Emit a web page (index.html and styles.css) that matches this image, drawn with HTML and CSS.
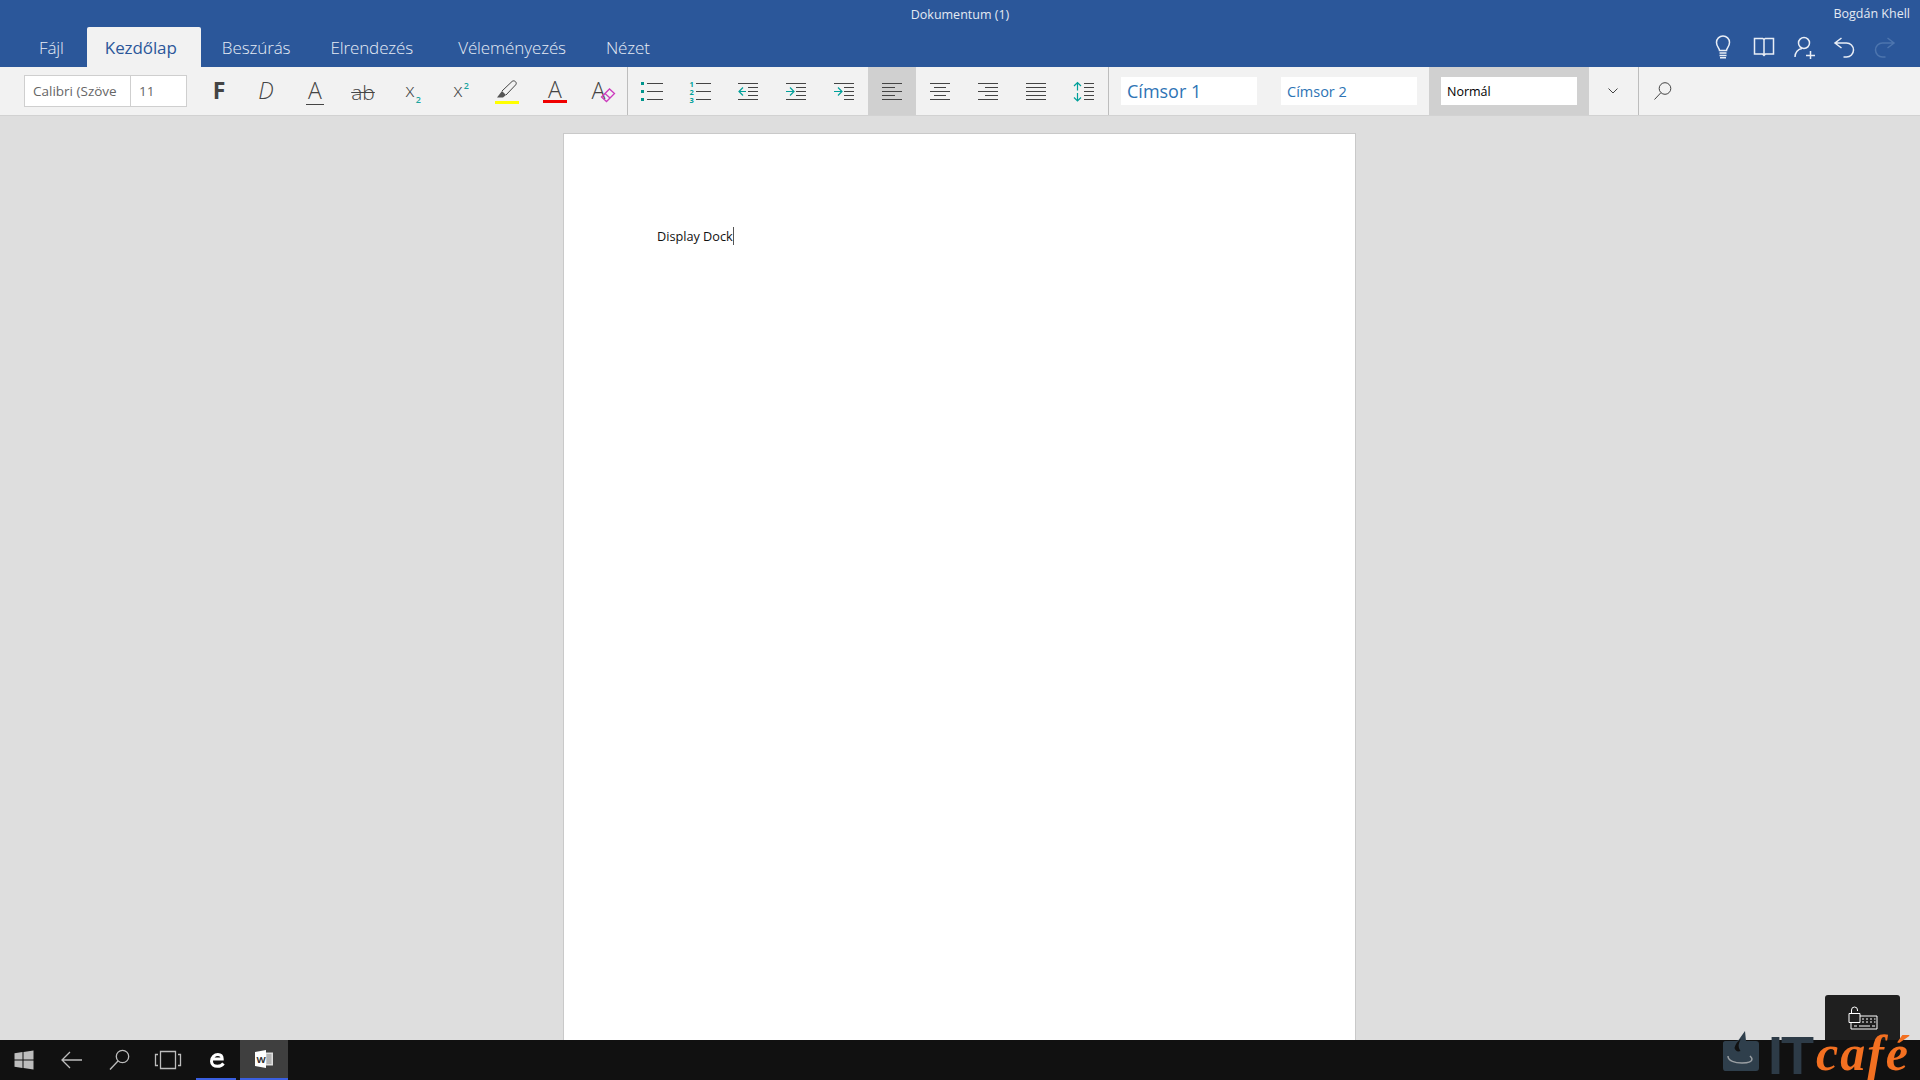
FILE: index.html
```html
<!DOCTYPE html>
<html lang="hu">
<head>
<meta charset="utf-8">
<title>Dokumentum (1) - Word</title>
<link rel="stylesheet" href="styles.css">
</head>
<body>
<div class="app">
  <header class="titlebar">
    <div class="title-row">
      <span class="doc-title">Dokumentum (1)</span>
      <span class="user-name">Bogdán Khell</span>
    </div>
    <div class="tab-row">
      <nav class="tabs">
        <span class="tab tab-file">Fájl</span>
        <span class="tab tab-home">Kezdőlap</span>
        <span class="tab tab-insert">Beszúrás</span>
        <span class="tab tab-layout">Elrendezés</span>
        <span class="tab tab-review">Véleményezés</span>
        <span class="tab tab-view">Nézet</span>
      </nav>
      <div class="quick">
        <span class="quick-btn"><svg class="ic24" viewBox="0 0 24 24"><path d="M8.5 15.5c0-2.500-3-3.800-3-8a6.500 6.500 0 0 1 13 0c0 4.200-3 5.500-3 8z"/><path d="M8.500 18h7M8.500 20.500h7M9 22.800h6"/></svg></span>
        <span class="quick-btn"><svg class="ic24" viewBox="0 0 24 24"><path d="M2.500 3.500h8.200l1.300 1 1.300-1h8.200v15.500h-8l-1.500 1.500-1.500-1.500h-8zM12 4.500v15.500"/></svg></span>
        <span class="quick-btn"><svg class="ic24" viewBox="0 0 24 24"><circle cx="12" cy="8" r="5.500"/><path d="M3 22c0-4.500 3-8 7-8.500M14 20.500h9M18.500 16v9"/></svg></span>
        <span class="quick-btn"><svg class="ic24" viewBox="0 0 24 24"><path d="M9.500 3l-6.500 5 6.500 5M3 8h11.500a7 7 0 0 1 0 14h-3"/></svg></span>
        <span class="quick-btn quick-dim"><svg class="ic24" viewBox="0 0 24 24"><path d="M14.500 3l6.500 5-6.500 5M21 8H9.500a7 7 0 0 0 0 14h3"/></svg></span>
      </div>
    </div>
  </header>

  <div class="toolbar">
    <div class="font-box">
      <span class="font-name">Calibri (Szöve</span>
      <span class="font-size">11</span>
    </div>
    <div class="group">
      <span class="btn"><b class="g g-bold">F</b></span>
      <span class="btn"><i class="g g-italic">D</i></span>
      <span class="btn"><span class="g g-under">A</span></span>
      <span class="btn"><span class="g g-strike">ab</span></span>
      <span class="btn"><span class="g g-script">x<sub class="teal-sub">2</sub></span></span>
      <span class="btn"><span class="g g-script">x<sup class="teal-sup">2</sup></span></span>
      <span class="btn btn-col">
        <svg class="pen" viewBox="0 0 24 20"><path class="pen-line" d="M7 11L17 1.500c1-1 2.500-.8 3.500.2s1 2.300 0 3.300L11 15"/><path class="pen-fill" d="M7 11l4 4-3 2.500H2z"/></svg>
        <span class="bar bar-yellow"></span>
      </span>
      <span class="btn btn-col"><span class="g g-color">A</span><span class="bar bar-red"></span></span>
      <span class="btn btn-clear"><span class="g g-clear">A</span>
        <svg class="eraser" viewBox="0 0 16 16"><path d="M1.500 10L9.500 2l5 4.500-8 8z"/><path d="M5 6.500l5 4.500"/></svg>
      </span>
    </div>
    <div class="group">
      <span class="btn"><svg class="ic24 ic-tool" viewBox="0 0 24 24"><path d="M7 4.500h16M7 12.500h16M7 20.500h16"/><path class="t-fill" d="M1 3h3v3H1zM1 11h3v3H1zM1 19h3v3H1z"/></svg></span>
      <span class="btn"><svg class="ic24 ic-tool" viewBox="0 0 24 24"><path d="M8 4.500h15M8 12.500h15M8 20.500h15"/><text class="t-num" x="1.500" y="7.500">1</text><text class="t-num" x="1.500" y="15.500">2</text><text class="t-num" x="1.500" y="23.500">3</text></svg></span>
      <span class="btn"><svg class="ic24 ic-tool" viewBox="0 0 24 24"><path d="M2 4.500h20M12 8.500h10M12 12.500h10M12 16.500h10M2 20.500h20"/><path class="t-line" d="M10 12.500H3M7 8.500l-4 4 4 4"/></svg></span>
      <span class="btn"><svg class="ic24 ic-tool" viewBox="0 0 24 24"><path d="M2 4.500h20M12 8.500h10M12 12.500h10M12 16.500h10M2 20.500h20"/><path class="t-line" d="M2 12.500h8M6 8.500l4 4-4 4"/></svg></span>
      <span class="btn"><svg class="ic24 ic-tool" viewBox="0 0 24 24"><path d="M2 4.500h20M12 8.500h10M12 12.500h10M12 16.500h10M12 20.500h10"/><path class="t-line" d="M2 12.500h8M6 8.500l4 4-4 4"/></svg></span>
      <span class="btn btn-active"><svg class="ic24 ic-tool" viewBox="0 0 24 24"><path d="M2 4.500h20M2 8.500h13M2 12.500h20M2 16.500h13M2 20.500h20"/></svg></span>
      <span class="btn"><svg class="ic24 ic-tool" viewBox="0 0 24 24"><path d="M2 4.500h20M6 8.500h12M2 12.500h20M6 16.500h12M2 20.500h20"/></svg></span>
      <span class="btn"><svg class="ic24 ic-tool" viewBox="0 0 24 24"><path d="M2 4.500h20M9 8.500h13M2 12.500h20M9 16.500h13M2 20.500h20"/></svg></span>
      <span class="btn"><svg class="ic24 ic-tool" viewBox="0 0 24 24"><path d="M2 4.500h20M2 8.500h20M2 12.500h20M2 16.500h20M2 20.500h20"/></svg></span>
      <span class="btn"><svg class="ic24 ic-tool" viewBox="0 0 24 24"><path d="M12 4.500h10M12 8.500h10M12 12.500h10M12 16.500h10M12 20.500h10"/><path class="t-line" d="M5.500 4v7.500M2 7l3.500-3.500L9 7M5.500 14v8M2 18.500L5.500 22 9 18.500"/></svg></span>
    </div>
    <div class="styles">
      <div class="style-cell"><span class="style-box style-h1">Címsor 1</span></div>
      <div class="style-cell"><span class="style-box style-h2">Címsor 2</span></div>
      <div class="style-cell style-cell-active"><span class="style-box style-normal">Normál</span></div>
    </div>
    <span class="btn btn-more"><svg class="ic24 ic-tool" viewBox="0 0 24 24"><path d="M7.500 9.500l4.500 4.500 4.500-4.500"/></svg></span>
    <span class="btn"><svg class="ic24 ic-tool" viewBox="0 0 24 24"><circle cx="14" cy="9.500" r="5.800"/><path d="M9.800 13.800L3.500 20.500"/></svg></span>
  </div>

  <main class="canvas">
    <article class="sheet"><p class="doc-text"><span class="caret">Display Dock</span></p></article>
  </main>

  <footer class="taskbar">
    <span class="task"><svg class="ic24 ic-task" viewBox="0 0 24 24"><path class="w-fill" d="M2.500 5.200l8-1.100v7.400h-8zM11.500 4l10-1.400v8.900h-10zM2.500 12.500h8v7.400l-8-1.100zM11.500 12.500h10v8.900l-10-1.400z"/></svg></span>
    <span class="task"><svg class="ic24 ic-task" viewBox="0 0 24 24"><path d="M2 12h20M10 4l-8 8 8 8"/></svg></span>
    <span class="task"><svg class="ic24 ic-task" viewBox="0 0 24 24"><circle cx="14.500" cy="8.500" r="6.200"/><path d="M10 13L2 21.500"/></svg></span>
    <span class="task"><svg class="ic-view" viewBox="0 0 28 20"><path d="M6.500 1.500h15v17h-15zM4 4.500H1.500v11H4M24 4.500h2.500v11H24"/></svg></span>
    <span class="task task-edge"><svg class="ic24" viewBox="0 0 24 24"><path class="edge" d="M19.500 15.500c-1.500 2-3.800 2.800-6 2.800-3.500 0-6-1.900-6-5 0-4 3.200-6.800 6.400-6.800 3 0 4.300 1.900 4.300 4.500H7.800"/></svg></span>
    <span class="task task-word"><svg class="ic-word" viewBox="0 0 20 20"><path class="word-sheet" d="M11 3.500h8v13h-8z"/><path class="word-lines" d="M12.500 6h5M12.500 8h5M12.500 10h5M12.500 12h5M12.500 14h5"/><path class="word-box" d="M1 3L12 1v18L1 17z"/><text class="word-w" x="2.600" y="13.500">W</text></svg></span>
  </footer>

  <div class="kbd-tip"><svg class="kbd-icon" viewBox="0 0 30 25"><path d="M1 8.500h11v9H1zM3.500 8.500V5a3 3 0 0 1 6 0v1M12 11h17v13H3v-6.500"/><path d="M14 14h2M18 14h2M22 14h2M26 14h1.500M14 17h2M18 17h2M22 17h2M26 17h1.500M6 21h3M11 21h11M24 21h3"/></svg></div>

  <div class="watermark">
    <svg class="wm-cup" viewBox="0 0 36 40"><path class="cup-body" d="M2 10h10c3 0 4-1 5-3l5-7 1 10h10c2 0 3 1 3 3v24c0 2-1 3-3 3H2c-1 0-2-1-2-3V12c0-1 1-2 2-2z"/><path class="cup-dark" d="M18 8c-3 5-3 8-.5 12-3 1-5 0-6-3 1-4 3-7 6.500-9z"/><path class="cup-arc" d="M5 25c0 5 7 7 14 7 5 0 10-1 10-4 0-1-1-2-2-3"/></svg>
    <span class="wm-it">IT</span>
    <span class="wm-cafe">café</span>
  </div>
</div>
</body>
</html>
```
FILE: styles.css
```css
* { box-sizing: border-box; }
html, body { margin: 0; height: 100%; overflow: hidden; }
body { font-family: "Open Sans", "Noto Sans", sans-serif; color: #444; background: #dedede; }
.app { position: relative; display: flex; flex-direction: column; height: 1080px; width: 1920px; overflow: hidden; }

/* title bar */
.titlebar { height: 67px; background: #2b579a; color: #fff; flex: none; }
.title-row { position: relative; height: 27px; display: flex; justify-content: center; align-items: center; font-size: 12.5px; color: #e4eaf3; }
.user-name { position: absolute; right: 10px; top: 5px; line-height: 18px; }
.doc-title { line-height: 18px; margin-top: 3px; }
.tab-row { height: 40px; display: flex; justify-content: space-between; }
.tabs { display: flex; padding-left: 18px; }
.tab { height: 40px; padding: 0 20px; display: flex; align-items: center; font-size: 17px; font-weight: 300; color: #e6ecf5; letter-spacing: -.1px; }
.tab-file { padding: 0 23px 0 21px; }
.tab-home { width: 114px; padding: 0 0 0 18px; background: #f2f2f2; color: #2b579a; font-weight: 400; border-radius: 2px 2px 0 0; }
.tab-insert { padding: 0 20px 0 21px; }
.tab-review { padding-left: 25px; }
.quick { display: flex; padding-right: 15px; }
.quick-btn { width: 40.4px; display: flex; justify-content: center; align-items: center; }
.ic24 { width: 24px; height: 24px; fill: none; stroke: currentColor; stroke-width: 1.3; }
.quick-btn .ic24 { color: #e9eef6; stroke-width: 1.5; }
.quick-dim .ic24 { color: #4d75ae; }

/* toolbar */
.toolbar { height: 49px; flex: none; display: flex; background: #f2f2f2; border-bottom: 1px solid #d2d2d2; }
.font-box { display: flex; width: 163px; height: 32px; margin: 8px 8px 0 24px; background: #fff; border: 1px solid #cfcfcf; font-size: 13.5px; color: #666; flex: none; }
.font-name { width: 106px; padding-left: 8px; border-right: 1px solid #cfcfcf; display: flex; align-items: center; white-space: nowrap; }
.font-size { padding-left: 8px; display: flex; align-items: center; }
.group { display: flex; border-right: 1px solid #bdbdbd; flex: none; }
.btn { position: relative; width: 48px; height: 48px; flex: none; display: flex; align-items: center; justify-content: center; }
.btn-active { background: #d0d0d0; }
.btn-more { width: 50px; border-right: 1px solid #bdbdbd; padding-right: 2px; }
.btn-col { flex-direction: column; }
.ic-tool { color: #444; stroke-width: 1; }
.t-fill { fill: #00958d; stroke: none; }
.t-line { stroke: #00a09a; stroke-width: 1.2; fill: none; }
.t-num { fill: #00a09a; stroke: none; font: 700 7.5px "Open Sans", sans-serif; }

.g { display: block; font-size: 23px; line-height: 24px; color: #444; font-weight: 300; margin-bottom: 2px; }
.g-bold { font-weight: 700; }
.g-italic { font-style: italic; margin-right: 2px; }
.g-under { border-bottom: 1px solid #444; padding: 0 2px; height: 27px; margin: 1px 0 0; }
.g-strike { font-size: 21px; text-decoration: line-through; text-decoration-thickness: 1px; padding: 0 2px; margin: 1px 0 0; }
.g-script { font-size: 19px; margin-left: 4px; }
.teal-sub, .teal-sup { font-size: 9px; color: #1aa5a0; font-weight: 600; margin-left: 1px; line-height: 0; }
.teal-sub { vertical-align: -6px; }
.teal-sup { vertical-align: 8px; }
.pen { width: 24px; height: 20px; margin-top: 2px; }
.pen-line { fill: none; stroke: #444; stroke-width: 1; }
.pen-fill { fill: #555; }
.bar { display: block; width: 24px; height: 3px; margin-top: 1px; }
.bar-yellow { background: #ffff00; }
.bar-red { background: #f00000; }
.g-color { height: 20px; line-height: 20px; margin: 0; }
.g-clear { margin-right: 9px; }
.eraser { position: absolute; left: 21px; top: 20px; width: 16px; height: 16px; fill: none; stroke: #cc3bbd; stroke-width: 1.3; }

/* style gallery */
.styles { display: flex; flex: none; }
.style-cell { width: 160px; height: 48px; padding: 10px 12px; flex: none; }
.style-cell-active { background: #d0d0d0; }
.style-box { display: flex; align-items: center; height: 28px; background: #fff; padding-left: 6px; white-space: nowrap; }
.style-h1 { font-size: 18px; color: #2e74b5; }
.style-h2 { font-size: 14.5px; color: #2e74b5; }
.style-normal { font-size: 12.5px; color: #000; }

/* document */
.canvas { flex: 1; min-height: 0; display: flex; justify-content: center; padding: 17px 1px 0 0; overflow: hidden; }
.sheet { width: 793px; height: 1100px; background: #fff; border: 1px solid #c9c9c9; padding: 93px 0 0 93px; flex: none; }
.doc-text { margin: 0; font-size: 12.7px; line-height: 18px; color: #111; }
.caret { border-right: 1px solid #555; display: inline-block; }

/* taskbar */
.taskbar { position: relative; z-index: 2; height: 40px; flex: none; display: flex; background: #111; }
.task { width: 48px; height: 40px; display: flex; align-items: center; justify-content: center; position: relative; flex: none; }
.ic-task { color: #bdbdbd; stroke-width: 1.3; }
.w-fill { fill: #bdbdbd; stroke: none; }
.ic-view { width: 28px; height: 20px; fill: none; stroke: #bdbdbd; stroke-width: 1.3; }
.task-edge::after { content: ""; position: absolute; left: 4px; right: 4px; bottom: 0; height: 2px; background: #3a5fe0; }
.task-word { background: #3f3f3f; border-bottom: 2px solid #3a5fe0; }
.edge { fill: none; stroke: #fff; stroke-width: 3; }
.ic-word { width: 20px; height: 20px; }
.word-sheet { fill: #ddd; }
.word-lines { stroke: #888; stroke-width: 1; }
.word-box { fill: #fff; }
.word-w { font: 700 9.5px "Open Sans", sans-serif; fill: #333; }

/* overlays */
.kbd-tip { position: absolute; left: 1825px; top: 995px; width: 75px; height: 60px; background: #1f1f1f; border-radius: 3px 3px 0 0; display: flex; justify-content: center; padding-top: 10px; z-index: 1; }
.kbd-icon { width: 30px; height: 25px; fill: none; stroke: #fff; stroke-width: 1; }
.watermark { position: absolute; left: 1723px; top: 1031px; width: 197px; height: 49px; z-index: 3; display: flex; align-items: flex-start; overflow: hidden; }
.wm-cup { width: 36px; height: 40px; flex: none; }
.cup-body { fill: #2f3f4c; }
.cup-dark { fill: #111; }
.cup-arc { fill: none; stroke: #9a9fa3; stroke-width: 1.5; }
.wm-it { font: 700 54px/49px "Liberation Sans", sans-serif; color: #2d3b47; margin-left: 9px; letter-spacing: -2px; flex: none; width: 46px; }
.wm-cafe { font: italic 700 50px/44px "Liberation Serif", serif; color: #f37021; margin-left: 2px; letter-spacing: 2px; flex: none; }
```
